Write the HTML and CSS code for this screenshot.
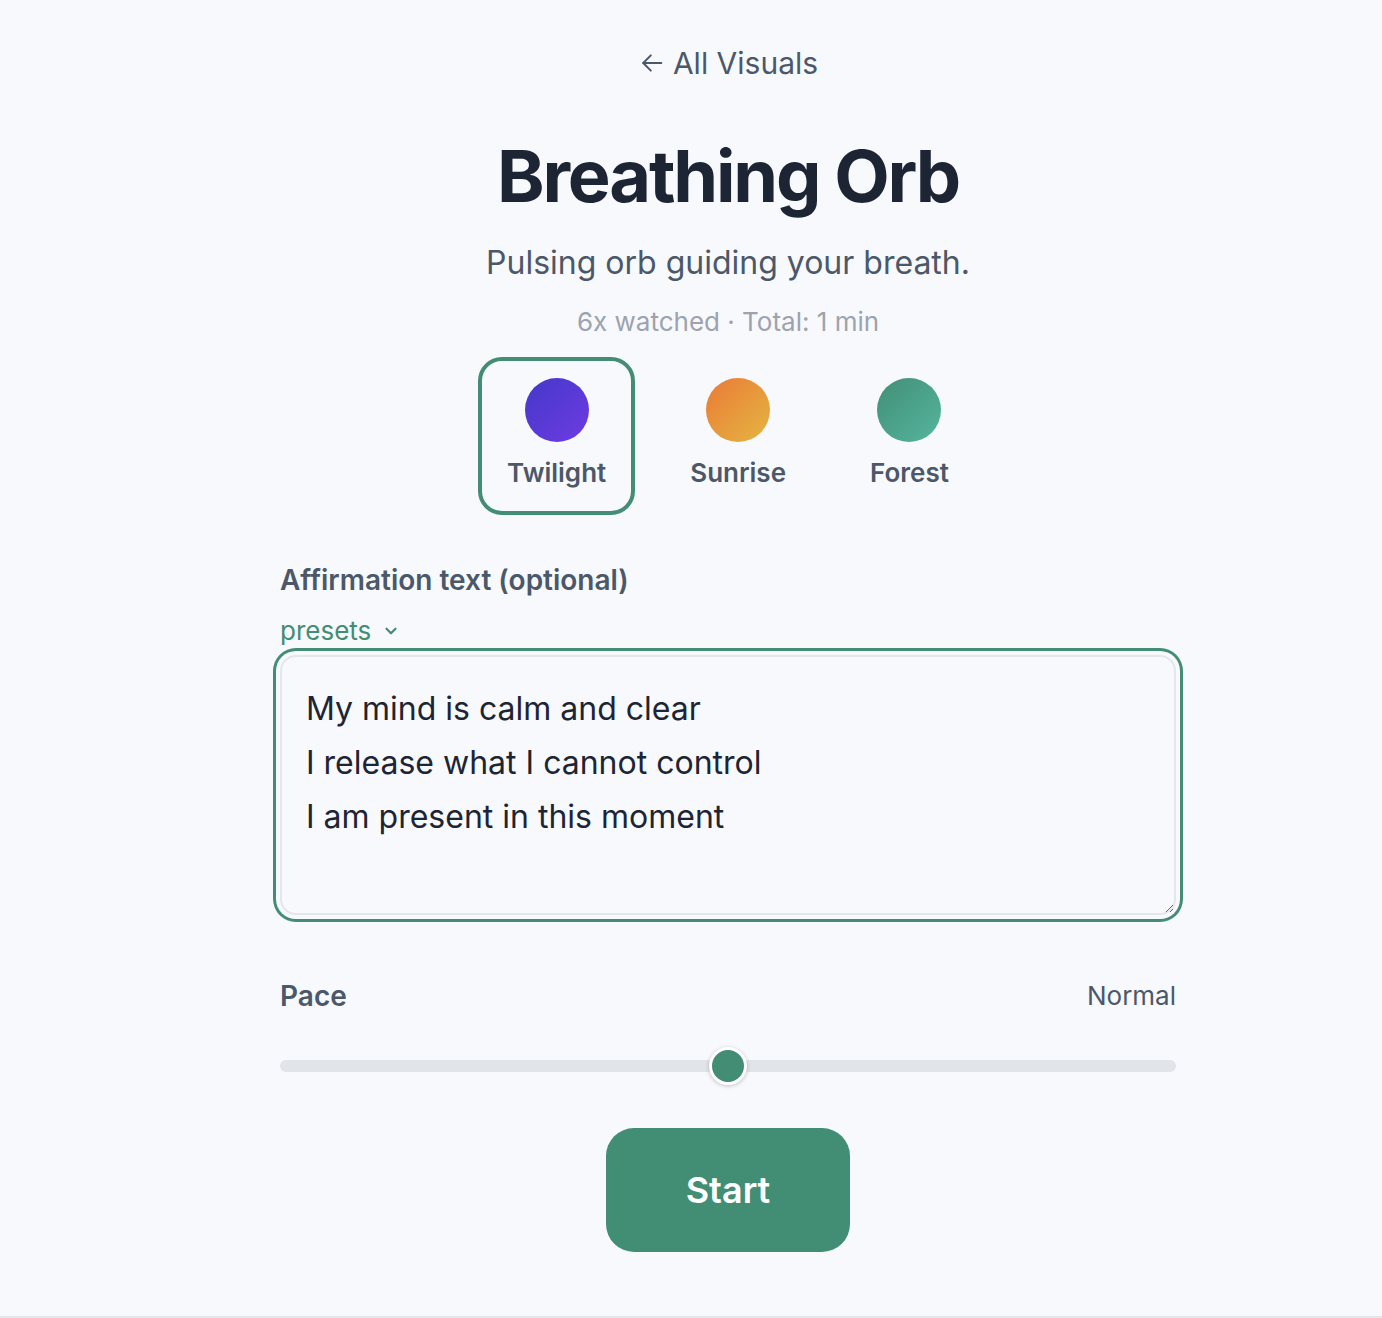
FILE: index.html
```html
<!DOCTYPE html>
<html lang="en">
<head>
<meta charset="utf-8">
<title>Breathing Orb</title>
<link rel="stylesheet" href="styles.css">
</head>
<body>
<div class="screen">
  <main class="page">
    <a class="back" href="#">
      <svg class="back-icon" width="28" height="28" viewBox="0 0 24 24" fill="none" stroke="currentColor" stroke-width="1.7" stroke-linecap="round" stroke-linejoin="round"><path d="M20 12H4.5"/><path d="M11 5.5L4.5 12l6.5 6.5"/></svg>
      <span>All Visuals</span>
    </a>
    <h1 class="title">Breathing Orb</h1>
    <p class="subtitle">Pulsing orb guiding your breath.</p>
    <p class="meta">6x watched · Total: 1 min</p>

    <div class="themes">
      <button class="theme is-active">
        <span class="orb orb-twilight"></span>
        <span class="theme-label">Twilight</span>
      </button>
      <button class="theme">
        <span class="orb orb-sunrise"></span>
        <span class="theme-label">Sunrise</span>
      </button>
      <button class="theme">
        <span class="orb orb-forest"></span>
        <span class="theme-label">Forest</span>
      </button>
    </div>

    <section class="field">
      <div class="field-label">Affirmation text (optional)</div>
      <button class="presets">presets
        <svg width="18" height="18" viewBox="0 0 16 16" fill="none" stroke="currentColor" stroke-width="1.9" stroke-linecap="round" stroke-linejoin="round"><path d="M4 6l4 4 4-4"/></svg>
      </button>
      <textarea class="affirm">My mind is calm and clear
I release what I cannot control
I am present in this moment</textarea>
    </section>

    <section class="pace">
      <div class="pace-row">
        <span class="field-label">Pace</span>
        <span class="pace-value">Normal</span>
      </div>
      <div class="slider">
        <div class="track"></div>
        <div class="thumb"></div>
      </div>
    </section>

    <div class="actions">
      <button class="start">Start</button>
    </div>
  </main>
</div>
</body>
</html>
```
FILE: styles.css
```css
* { box-sizing: border-box; }
html, body { margin: 0; padding: 0; }
body {
  background: #f8f9fc;
  font-family: Inter, "Noto Sans", "Liberation Sans", sans-serif;
  color: #1e293b;
}
.screen {
  min-height: 1318px;
  border-bottom: 2px solid #e4e6ea;
}
.page {
  width: 896px;
  margin-left: 280px;
  padding-top: 43px;
  display: flex;
  flex-direction: column;
  align-items: center;
}
.back {
  display: flex;
  align-items: center;
  gap: 7px;
  font-size: 30px;
  line-height: 40px;
  color: #4b5869;
  text-decoration: none;
}
.back-icon { display: block; }
.title {
  margin: 53px 0 0;
  font-size: 72px;
  line-height: 80px;
  font-weight: 700;
  letter-spacing: -0.03em;
  color: #1d2535;
}
.subtitle {
  margin: 27px 0 0;
  font-size: 32px;
  line-height: 40px;
  color: #4b5869;
}
.meta {
  margin: 23px 0 0;
  font-size: 26px;
  line-height: 32px;
  color: #9ca3af;
}
.themes {
  margin-top: 19px;
  display: flex;
  gap: 26px;
}
.theme {
  display: flex;
  flex-direction: column;
  align-items: center;
  gap: 13px;
  padding: 17px 25px 20px;
  border: 4px solid transparent;
  border-radius: 24px;
  background: transparent;
  font-family: inherit;
  cursor: pointer;
}
.theme.is-active { border-color: #428d73; }
.orb {
  width: 64px;
  height: 64px;
  border-radius: 50%;
  display: block;
}
.orb-twilight { background: linear-gradient(135deg, #4438c8, #6f3be3); }
.orb-sunrise { background: linear-gradient(135deg, #ea7a36, #e4b642); }
.orb-forest { background: linear-gradient(135deg, #428f75, #55b59f); }
.theme-label {
  font-size: 26px;
  line-height: 36px;
  font-weight: 600;
  color: #4b5869;
}
.field {
  align-self: stretch;
  margin-top: 47px;
  display: flex;
  flex-direction: column;
  align-items: flex-start;
}
.field-label {
  font-size: 28px;
  line-height: 36px;
  font-weight: 600;
  color: #4b5869;
}
.presets {
  margin-top: 17px;
  padding: 0;
  border: 0;
  background: transparent;
  font-family: inherit;
  font-size: 26px;
  line-height: 32px;
  color: #428d73;
  display: flex;
  align-items: center;
  gap: 11px;
}
.presets svg { display: block; }
.affirm {
  margin-top: 8px;
  width: 100%;
  height: 260px;
  padding: 25px 24px 21px;
  border: 2px solid #e3e6ea;
  border-radius: 16px;
  background: #f8f9fc;
  font-family: inherit;
  font-size: 32px;
  line-height: 54px;
  color: #1d2535;
  box-shadow: 0 0 0 4px #f8f9fc, 0 0 0 7px #428d73;
  outline: none;
  display: block;
}
.pace {
  align-self: stretch;
  margin-top: 63px;
}
.pace-row {
  display: flex;
  justify-content: space-between;
  align-items: center;
}
.pace-value {
  font-size: 26px;
  line-height: 36px;
  color: #4b5869;
}
.slider {
  position: relative;
  margin-top: 46px;
  height: 12px;
}
.track {
  height: 12px;
  border-radius: 6px;
  background: #e1e4e8;
}
.thumb {
  position: absolute;
  left: 50%;
  top: 50%;
  width: 38px;
  height: 38px;
  margin: -19px 0 0 -19px;
  border-radius: 50%;
  background: #428d73;
  border: 3px solid #ffffff;
  box-shadow: 0 1px 4px rgba(0, 0, 0, 0.22);
}
.actions {
  margin-top: 56px;
  display: flex;
  justify-content: center;
}
.start {
  width: 244px;
  height: 124px;
  border: 0;
  border-radius: 28px;
  background: #428e74;
  color: #ffffff;
  font-family: inherit;
  font-size: 36px;
  font-weight: 600;
  cursor: pointer;
}
```
